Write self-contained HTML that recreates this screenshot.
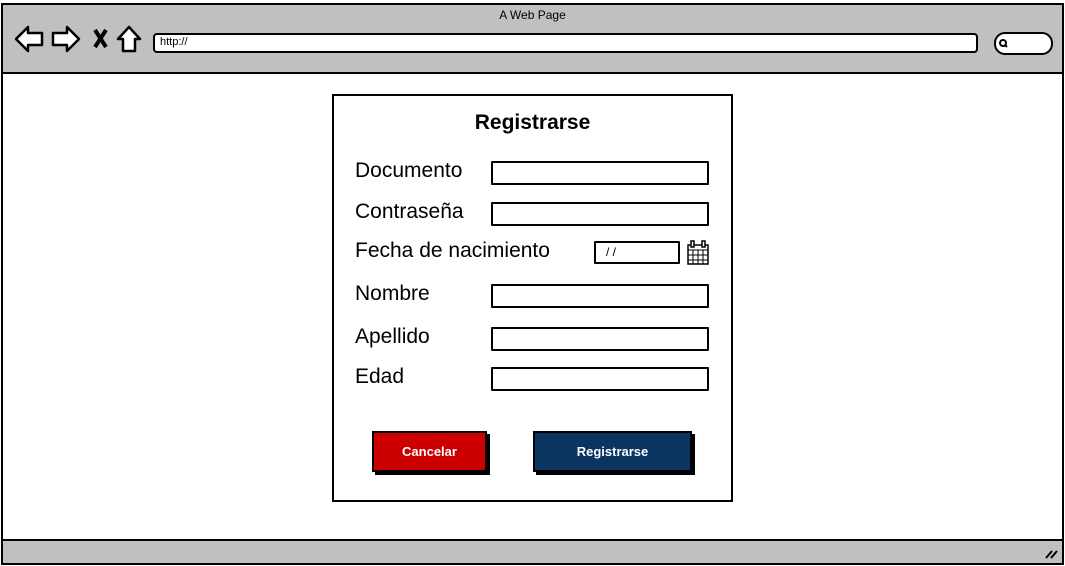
<!DOCTYPE html>
<html><head><meta charset="utf-8"><style>
*{box-sizing:border-box;margin:0;padding:0}
body{width:1065px;height:566px;background:#fff;position:relative;overflow:hidden;font-family:"Liberation Sans",sans-serif;color:#000}
.a{position:absolute}
.inp{position:absolute;border:2px solid #000;background:#fff;border-radius:1px}
.lbl{position:absolute;font-size:21px;left:355px}
.btn{position:absolute;color:#fff;font-size:13px;font-weight:bold;text-align:center;line-height:38px;border:2px solid #000;box-shadow:3px 3px 0 #000}
</style></head><body>
<div class="a" style="left:1px;top:3px;width:1063px;height:562px;border:2px solid #000;background:#fff"></div>
<div class="a" style="left:3px;top:5px;width:1059px;height:69px;background:#c0c0c0;border-bottom:2px solid #000"></div>
<div class="a" style="left:3px;top:539px;width:1059px;height:24px;background:#c0c0c0;border-top:2px solid #000"></div>
<div class="a" style="left:0;top:8px;width:1065px;text-align:center;font-size:12px">A Web Page</div>
<svg class="a" style="left:0;top:0" width="1065" height="566">
<g fill="#fff" stroke="#000" stroke-width="2.5" stroke-linejoin="round">
<path d="M16 39 L28 27 L28 33 L42 33 L42 45 L28 45 L28 51 Z"/>
<path d="M79 39 L67 27 L67 33 L53 33 L53 45 L67 45 L67 51 Z"/>
<path d="M118 39 L129 27 L140 39 L135 39 L135 51 L123 51 L123 39 Z"/>
</g>
<path d="M95 30 L106 47 M106 30 L95 47" stroke="#000" stroke-width="4"/>
<rect x="154" y="34" width="823" height="18" rx="3" fill="#fff" stroke="#000" stroke-width="2"/>
<rect x="995" y="33" width="57" height="21" rx="10" fill="#fff" stroke="#000" stroke-width="2"/>
<circle cx="1003" cy="43" r="3" fill="none" stroke="#000" stroke-width="2"/>
<path d="M1005 45 L1007 47" stroke="#000" stroke-width="2"/>
<path d="M1046 558 L1052 551 M1051 558 L1057 551" stroke="#000" stroke-width="2"/>
<g stroke="#000" stroke-width="1" fill="#fff">
<rect x="688" y="245" width="20" height="19" stroke-width="1.5"/>
<path d="M688 250 H708 M688 255 H708 M688 260 H708 M693 250 V264 M698 250 V264 M703 250 V264"/>
<rect x="691" y="241" width="3" height="6" stroke-width="1.5"/>
<rect x="702" y="241" width="3" height="6" stroke-width="1.5"/>
</g>
</svg>
<div class="a" style="left:160px;top:36px;font-size:11px">http://</div>
<div class="a" style="left:332px;top:94px;width:401px;height:408px;border:2px solid #000"></div>
<div class="a" style="left:332px;top:111px;width:401px;text-align:center;font-size:21px;font-weight:bold">Registrarse</div>
<div class="lbl" style="top:159px">Documento</div>
<div class="lbl" style="top:200px">Contraseña</div>
<div class="lbl" style="top:239px">Fecha de nacimiento</div>
<div class="lbl" style="top:282px">Nombre</div>
<div class="lbl" style="top:325px">Apellido</div>
<div class="lbl" style="top:365px">Edad</div>
<div class="inp" style="left:491px;top:161px;width:218px;height:24px"></div>
<div class="inp" style="left:491px;top:202px;width:218px;height:24px"></div>
<div class="inp" style="left:594px;top:241px;width:86px;height:23px;font-size:12px;padding-left:10px;line-height:19px">/ /</div>
<div class="inp" style="left:491px;top:284px;width:218px;height:24px"></div>
<div class="inp" style="left:491px;top:327px;width:218px;height:24px"></div>
<div class="inp" style="left:491px;top:367px;width:218px;height:24px"></div>
<div class="btn" style="left:372px;top:431px;width:115px;height:41px;background:#cc0000">Cancelar</div>
<div class="btn" style="left:533px;top:431px;width:159px;height:41px;background:#0a3560">Registrarse</div>
</body></html>
